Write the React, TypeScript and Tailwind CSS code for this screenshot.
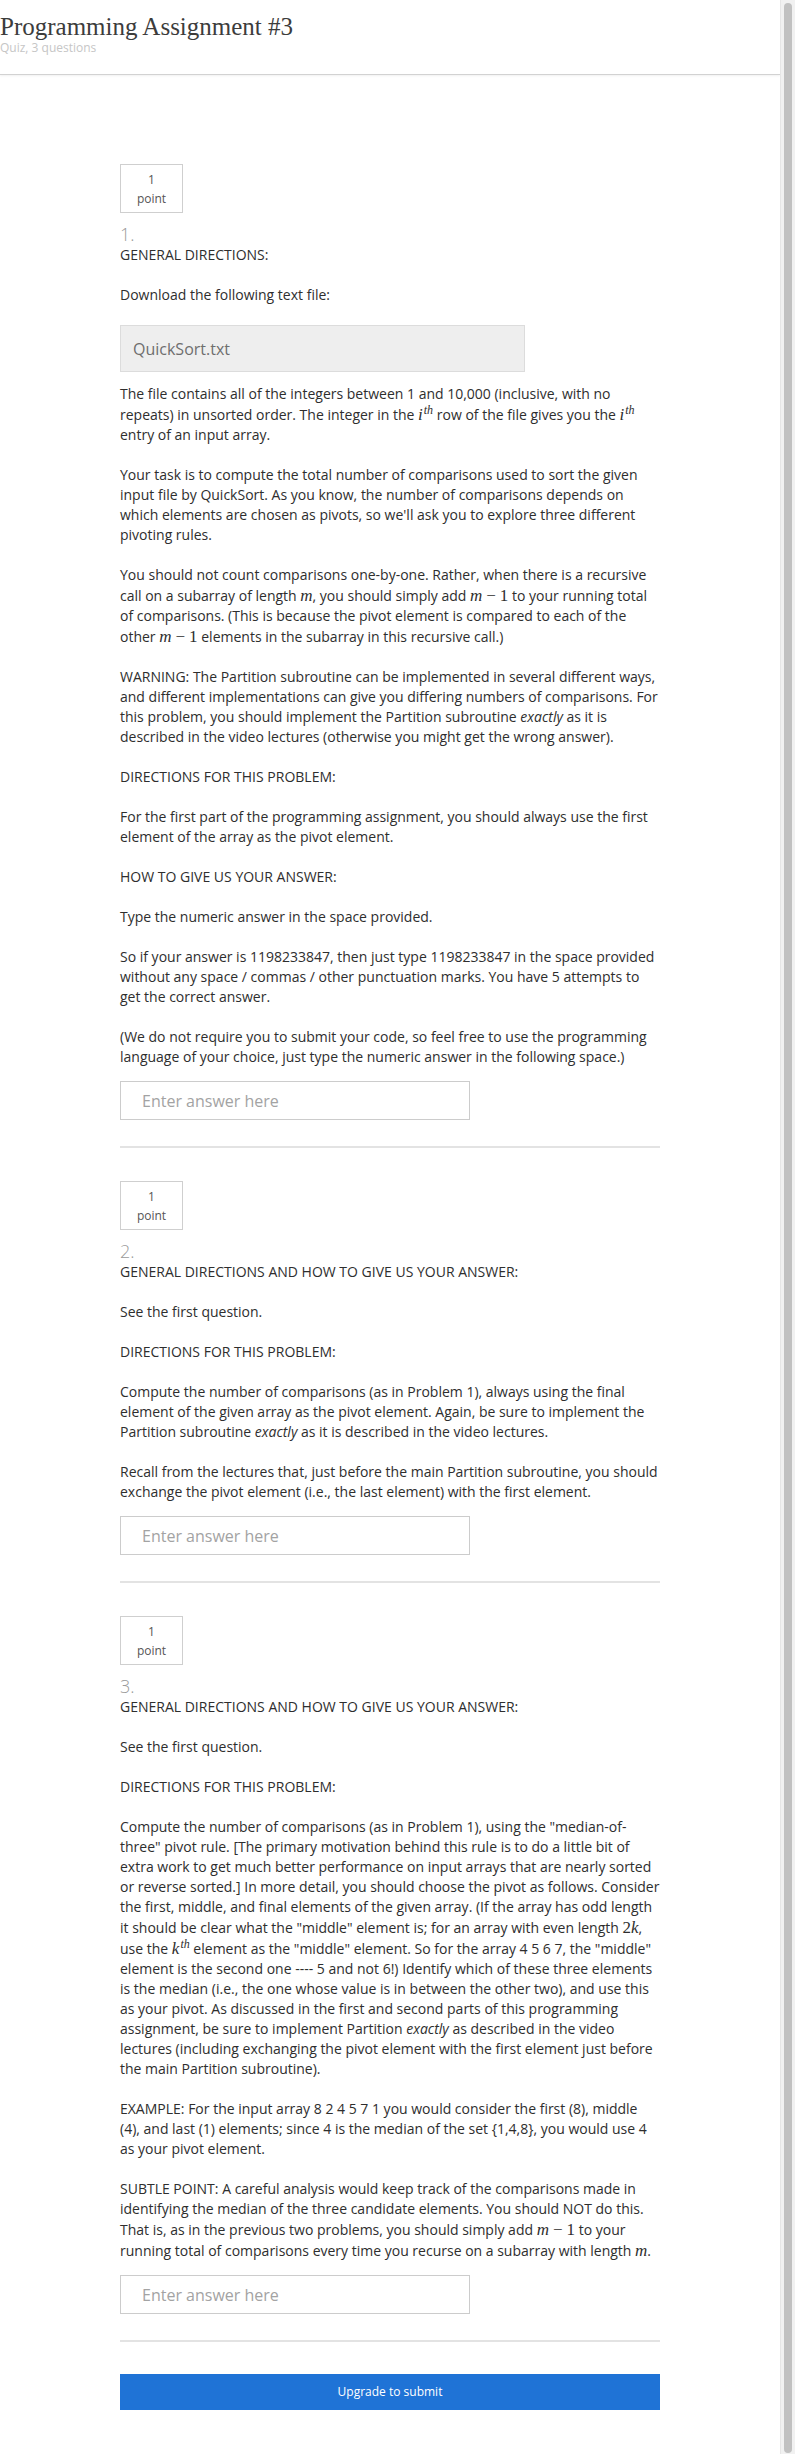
import type { ReactNode } from 'react';

// KaTeX-ish inline math: bigger serif glyphs that push the line box down ~1px
const math = "font-['Liberation_Serif','DejaVu_Serif',serif] text-[17px] leading-[21px]";

function V({ children }: { children: ReactNode }) {
  return <span className={`${math} italic`}>{children}</span>;
}

function Sup({ base }: { base: string }) {
  return (
    <span className={`${math} italic`}>
      {base}
      <sup className="ml-[1px] text-[12px]">th</sup>
    </span>
  );
}

function MinusOne() {
  return (
    <span className={math}>
      <i>m</i>
      <span className="mx-[4px]">−</span>1
    </span>
  );
}

function PointBox() {
  return (
    <div className="flex h-[49px] w-[63px] flex-col items-center justify-center border border-[#cfcfcf] text-[12px] leading-[19px] text-[#555]">
      <span>1</span>
      <span>point</span>
    </div>
  );
}

function Question({ n, children }: { n: number; children: ReactNode }) {
  return (
    <section>
      <PointBox />
      <div className="mt-[10px] text-[18px] font-light leading-[22px] text-[#9a9a9a]">{n}.</div>
      <div className="text-[14px] leading-5 text-[#2e2e2e]">{children}</div>
      <input
        type="text"
        placeholder="Enter answer here"
        className="mt-[14px] block h-[39px] w-[350px] border border-[#cccccc] bg-white pl-[21px] text-[16px] text-[#333] outline-none placeholder:text-[#a3a3a3]"
      />
      <div className="mt-[26px] h-[2px] w-full bg-[#e3e3e3]" />
    </section>
  );
}

export default function App() {
  return (
    <div className="flex w-[795px] bg-white font-['Open_Sans','Liberation_Sans',sans-serif]">
      <main className="w-[780px]">
        <header className="h-[75px] border-b border-[#d2d2d2] pt-3 shadow-[0_1px_2px_rgba(0,0,0,0.06)]">
          <h1 className="font-['Liberation_Serif','DejaVu_Serif',serif] text-[25px] leading-[30px] text-[#3c3c3c]">
            Programming Assignment #3
          </h1>
          <p className="-mt-px text-[12px] leading-[14px] text-[#c6c6c6]">Quiz, 3 questions</p>
        </header>

        <div className="w-[660px] pl-[120px] pt-[89px] pb-[46px]">
          <div className="flex flex-col gap-[33px]">
            <Question n={1}>
              <p className="mb-5">GENERAL DIRECTIONS:</p>
              <p className="mb-5">Download the following text file:</p>
              <div className="mb-3 flex h-[47px] w-[405px] items-center border border-[#dcdcdc] bg-[#eeeeee] pl-3 text-[16px] text-[#6e6e6e]">
                QuickSort.txt
              </div>
              <p className="mb-5">
                The file contains all of the integers between 1 and 10,000 (inclusive, with no repeats) in unsorted
                order. The integer in the <Sup base="i" /> row of the file gives you the <Sup base="i" /> entry of an
                input array.
              </p>
              <p className="mb-5">
                Your task is to compute the total number of comparisons used to sort the given input file by
                QuickSort. As you know, the number of comparisons depends on which elements are chosen as pivots, so
                we'll ask you to explore three different pivoting rules.
              </p>
              <p className="mb-5">
                You should not count comparisons one-by-one. Rather, when there is a recursive call on a subarray of
                length <V>m</V>, you should simply add <MinusOne /> to your running total of comparisons. (This is
                because the pivot element is compared to each of the other <MinusOne /> elements in the subarray in
                this recursive call.)
              </p>
              <p className="mb-5">
                WARNING: The Partition subroutine can be implemented in several different ways, and different
                implementations can give you differing numbers of comparisons. For this problem, you should implement
                the Partition subroutine <em>exactly</em> as it is described in the video lectures (otherwise you might
                get the wrong answer).
              </p>
              <p className="mb-5">DIRECTIONS FOR THIS PROBLEM:</p>
              <p className="mb-5">
                For the first part of the programming assignment, you should always use the first element of the array
                as the pivot element.
              </p>
              <p className="mb-5">HOW TO GIVE US YOUR ANSWER:</p>
              <p className="mb-5">Type the numeric answer in the space provided.</p>
              <p className="mb-5">
                So if your answer is 1198233847, then just type 1198233847 in the space provided without any space /
                commas / other punctuation marks. You have 5 attempts to get the correct answer.
              </p>
              <p>
                (We do not require you to submit your code, so feel free to use the programming language of your
                choice, just type the numeric answer in the following space.)
              </p>
            </Question>

            <Question n={2}>
              <p className="mb-5">GENERAL DIRECTIONS AND HOW TO GIVE US YOUR ANSWER:</p>
              <p className="mb-5">See the first question.</p>
              <p className="mb-5">DIRECTIONS FOR THIS PROBLEM:</p>
              <p className="mb-5">
                Compute the number of comparisons (as in Problem 1), always using the final element of the given array
                as the pivot element. Again, be sure to implement the Partition subroutine <em>exactly</em> as it is
                described in the video lectures.
              </p>
              <p>
                Recall from the lectures that, just before the main Partition subroutine, you should exchange the pivot
                element (i.e., the last element) with the first element.
              </p>
            </Question>

            <Question n={3}>
              <p className="mb-5">GENERAL DIRECTIONS AND HOW TO GIVE US YOUR ANSWER:</p>
              <p className="mb-5">See the first question.</p>
              <p className="mb-5">DIRECTIONS FOR THIS PROBLEM:</p>
              <p className="mb-5">
                Compute the number of comparisons (as in Problem 1), using the "median-of-three" pivot rule. [The
                primary motivation behind this rule is to do a little bit of extra work to get much better performance
                on input arrays that are nearly sorted or reverse sorted.] In more detail, you should choose the pivot
                as follows. Consider the first, middle, and final elements of the given array. (If the array has odd
                length it should be clear what the "middle" element is; for an array with even length{' '}
                <span className={math}>
                  2<i>k</i>
                </span>
                , use the <Sup base="k" /> element as the "middle" element. So for the array 4 5 6 7, the "middle"
                element is the second one ---- 5 and not 6!) Identify which of these three elements is the median
                (i.e., the one whose value is in between the other two), and use this as your pivot. As discussed in
                the first and second parts of this programming assignment, be sure to implement Partition{' '}
                <em>exactly</em> as described in the video lectures (including exchanging the pivot element with the
                first element just before the main Partition subroutine).
              </p>
              <p className="mb-5">
                EXAMPLE: For the input array 8 2 4 5 7 1 you would consider the first (8), middle (4), and last (1)
                elements; since 4 is the median of the set {'{1,4,8}'}, you would use 4 as your pivot element.
              </p>
              <p>
                SUBTLE POINT: A careful analysis would keep track of the comparisons made in identifying the median of
                the three candidate elements. You should NOT do this. That is, as in the previous two problems, you
                should simply add <MinusOne /> to your running total of comparisons every time you recurse on a
                subarray with length <V>m</V>.
              </p>
            </Question>
          </div>

          <button
            type="button"
            className="mt-[32px] flex h-[36px] w-full items-center justify-center bg-[#1f73d6] text-[12px] text-white"
          >
            Upgrade to submit
          </button>
        </div>
      </main>

      <aside className="flex w-[15px] flex-col border-l border-[#e6e6e6] bg-[#f1f1f1] py-[3px]">
        <div className="ml-[3px] w-[8px] flex-1 rounded-full bg-[#c1c1c1]" />
      </aside>
    </div>
  );
}
